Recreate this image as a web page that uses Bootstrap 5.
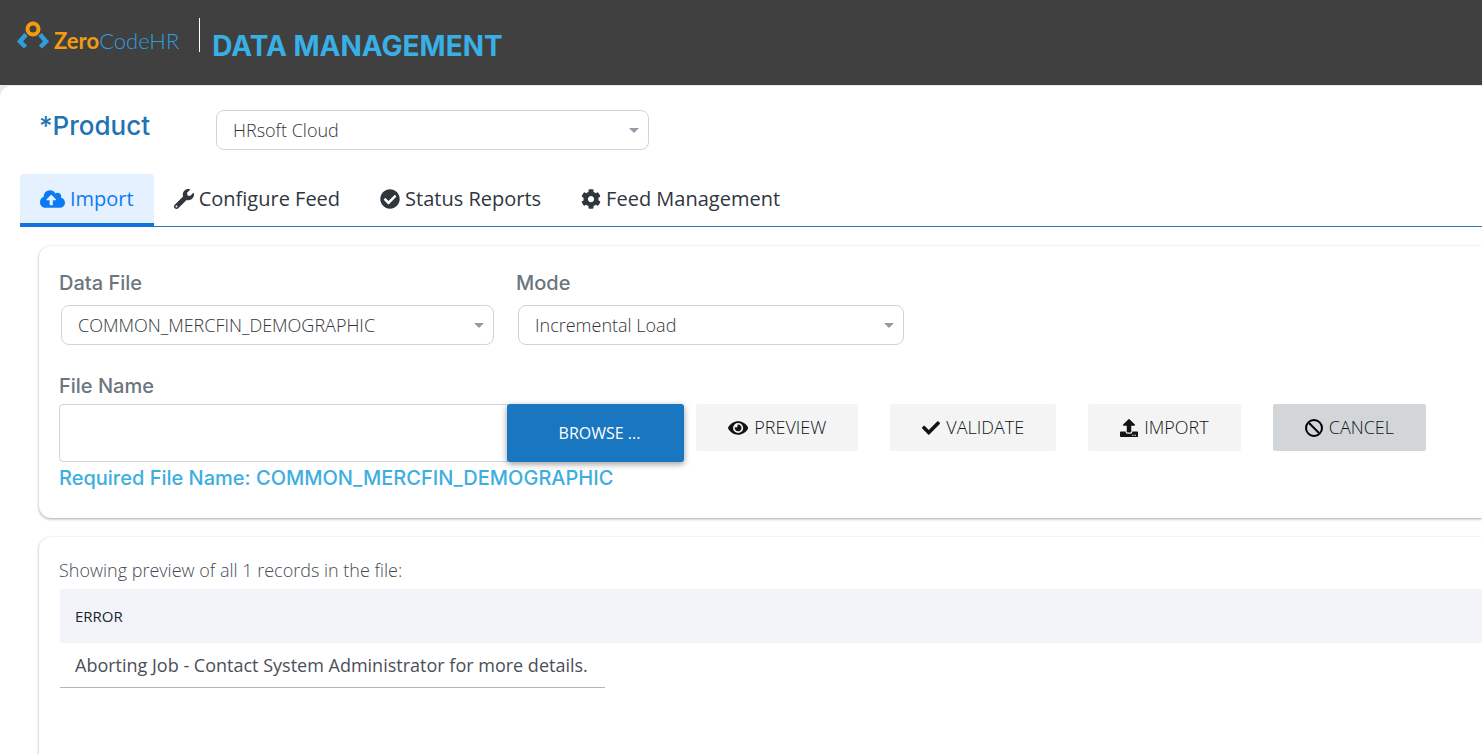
<!DOCTYPE html>
<html lang="en">
<head>
<meta charset="utf-8">
<meta name="viewport" content="width=device-width, initial-scale=1">
<title>ZeroCodeHR - Data Management</title>
<link href="https://cdn.jsdelivr.net/npm/bootstrap@5.3.0/dist/css/bootstrap.min.css" rel="stylesheet">
<style>
  body { font-family: "Open Sans", "Noto Sans", sans-serif; font-size: 18px; line-height: 24px; color: #495057; background: #e9eaec; }
  .icon { height: 1em; width: auto; fill: currentColor; flex: none; }
  .heading-font { font-family: Inter, "Open Sans", sans-serif; font-weight: 500; }
  .topbar { background: #404040; height: 85px; padding: 18px 16px 0; }
  .brand-mark { width: 33px; height: 30px; margin-top: 2px; }
  .brand-name { font-family: Lato, "Open Sans", sans-serif; font-size: 22px; font-weight: 300; color: #2e9fdc; margin: 11px 20px 0 5px; }
  .brand-name b { color: #f39c12; font-weight: 700; }
  .divider { width: 1px; height: 34px; background: #fff; margin-right: 12px; }
  .page-title { font-size: 28px; line-height: 32px; color: #38b0e5; font-weight: 650; margin: 12px 0 0; }
  .sheet { background: #fff; border-radius: 12px 0 0 0; margin-top: 1px; min-height: calc(100vh - 86px); padding: 24px 0 0 20px; }
  .product-row { padding-left: 19px; height: 64px; }
  .product-label { width: 177px; font-size: 26px; line-height: 32px; color: #2273b5; }
  .pick { height: 40px; font-size: 18px; font-weight: 300; line-height: 24px; color: #30363c; padding: 6px 32px 6px 16px; border: 1px solid #ced4da; border-radius: 8px;
    background-image: url("data:image/svg+xml,%3Csvg xmlns='http://www.w3.org/2000/svg' viewBox='0 0 10 5'%3E%3Cpath fill='%23939ba6' d='M0 0h10L5 5z'/%3E%3C/svg%3E");
    background-size: 10px 5px; background-position: right 9px center; }
  .pick-wide { width: 433px; }
  .pick-mid { width: 386px; }
  .tabs { border-bottom: 1px solid #2779b5; height: 53px; }
  .tabs .nav-link { display: flex; align-items: center; gap: 5px; font-size: 20px; line-height: 24px; color: #30363d; height: 53px; padding: 0 20px; border-bottom: 4px solid transparent; border-radius: 4px 4px 0 0; }
  .tabs .nav-link.active { color: #0d7af5; background: #e5f1fe; border-bottom-color: #1173df; }
  .panel { margin-left: 19px; background: #fff; border-radius: 12px 0 0 12px; box-shadow: 0 1px 3px rgba(0,0,0,.35); padding: 20px 0 0 20px; }
  .form-panel { margin-top: 19px; padding-bottom: 24px; }
  .result-panel { margin-top: 19px; min-height: 240px; }
  .field-label { display: block; font-size: 20px; line-height: 34px; color: #6c757d; }
  .field-row { gap: 22px; }
  .field-row .pick { margin: 5px 0 0 2px; }
  .file-row { margin-top: 1px; }
  .file-box { flex: none; width: 449px; height: 58px; border: 1px solid #ced4da; border-radius: 4px 0 0 4px; font-size: 18px; }
  .browse { width: 177px; height: 58px; margin: 0 12px 0 -1px; font-size: 16px; color: #fff; background: #1976c0; border: 0; border-radius: 3px; box-shadow: 0 2px 6px rgba(0,0,0,.4); padding: 0 0 0 8px; }
  .browse:hover { background: #1569ad; color: #fff; }
  .actions { gap: 32px; }
  .action { display: inline-flex; align-items: center; justify-content: center; gap: 6px; height: 47px; padding: 0 32px; font-size: 18px; font-weight: 300; white-space: nowrap; color: #111417; background: #f4f4f4; border: 0; border-radius: 2px; }
  .action.cancel { background: #d3d6d9; }
  .required { font-size: 20px; line-height: 32px; color: #3daee0; }
  .summary { font-weight: 300; line-height: 26px; color: #454c53; }
  .records { margin: 6px 0 0 1px; border-spacing: 0; }
  .records th { background: #f3f4f9; font-size: 15px; font-weight: 400; color: #212529; height: 54px; padding: 0 15px; }
  .records td { height: 44px; padding: 0 17px 0 15px; border-bottom: 1px solid #b5b5b5; }
  .records .filler { border: 0; }
</style>
</head>
<body>
<header class="topbar d-flex align-items-start">
  <svg class="brand-mark" viewBox="0 0 33 30" fill="none" aria-hidden="true">
    <path d="M10 14.500 4 21.500l5.500 5.500M24 14.500 30 21.500l-5.500 5.500" stroke="#2e9fdc" stroke-width="4.500"/>
    <circle cx="17" cy="9" r="5.500" stroke="#f39c12" stroke-width="4"/>
  </svg>
  <div class="brand-name"><b>Zero</b>CodeHR</div>
  <div class="divider"></div>
  <h1 class="page-title heading-font">DATA MANAGEMENT</h1>
</header>

<main class="sheet">
  <div class="product-row d-flex align-items-start">
    <label for="product" class="product-label heading-font">*Product</label>
    <select id="product" class="form-select pick pick-wide"><option>HRsoft Cloud</option></select>
  </div>

  <nav class="nav tabs">
    <a class="nav-link active" href="#import" aria-current="page"><svg class="icon" viewBox="0 0 640 512"><path d="M537.6 226.6c4.1-10.7 6.4-22.4 6.4-34.6 0-53-43-96-96-96-19.7 0-38.1 6-53.3 16.2C367 64.2 315.3 32 256 32c-88.4 0-160 71.6-160 160 0 2.7.1 5.4.2 8.1C40.2 219.8 0 273.2 0 336c0 79.5 64.5 144 144 144h368c70.700 0 128-57.300 128-128 0-61.900-44-113.600-102.400-125.400zM393.400 288H328v112c0 8.800-7.200 16-16 16h-48c-8.800 0-16-7.200-16-16V288h-65.400c-14.300 0-21.400-17.200-11.300-27.300l105.400-105.400c6.200-6.200 16.400-6.200 22.600 0l105.400 105.400c10.100 10.100 2.900 27.300-11.300 27.300z"/></svg>Import</a>
    <a class="nav-link" href="#configure"><svg class="icon" viewBox="0 0 512 512"><path d="M507.730 109.100c-2.240-9.030-13.540-12.090-20.120-5.510l-74.360 74.360-67.880-11.310-11.310-67.880 74.360-74.360c6.620-6.620 3.430-17.900-5.660-20.160-47.380-11.740-99.550.91-136.580 37.930-39.640 39.640-50.550 97.100-34.050 147.200L18.740 402.760c-24.990 24.990-24.990 65.510 0 90.500 24.990 24.990 65.510 24.990 90.500 0l213.210-213.210c50.120 16.710 107.470 5.680 147.370-34.220 37.070-37.070 49.700-89.320 37.910-136.730zM64 472c-13.250 0-24-10.750-24-24 0-13.260 10.750-24 24-24s24 10.740 24 24c0 13.250-10.750 24-24 24z"/></svg>Configure Feed</a>
    <a class="nav-link" href="#status"><svg class="icon" viewBox="0 0 512 512"><path d="M504 256c0 136.967-111.033 248-248 248S8 392.967 8 256 119.033 8 256 8s248 111.033 248 248zM227.314 387.314l184-184c6.248-6.248 6.248-16.379 0-22.627l-22.627-22.627c-6.248-6.249-16.379-6.249-22.628 0L216 308.118l-70.059-70.059c-6.248-6.248-16.379-6.248-22.628 0l-22.627 22.627c-6.248 6.248-6.248 16.379 0 22.627l104 104c6.249 6.249 16.379 6.249 22.628.001z"/></svg>Status Reports</a>
    <a class="nav-link" href="#feeds"><svg class="icon" viewBox="0 0 512 512"><path d="M487.400 315.700l-42.600-24.600c4.300-23.200 4.300-47 0-70.200l42.600-24.600c4.900-2.800 7.100-8.600 5.500-14-11.100-35.600-30-67.800-54.700-94.600-3.800-4.100-10-5.100-14.800-2.300L380.800 110c-17.900-15.400-38.500-27.300-60.800-35.100V25.800c0-5.600-3.900-10.500-9.400-11.700-36.700-8.200-74.300-7.800-109.200 0-5.500 1.200-9.400 6.100-9.400 11.700V75c-22.200 7.900-42.800 19.800-60.800 35.100L88.700 85.500c-4.900-2.800-11-1.900-14.800 2.300-24.700 26.700-43.600 58.900-54.700 94.600-1.700 5.400.6 11.200 5.500 14L67.300 221c-4.300 23.200-4.300 47 0 70.200l-42.600 24.600c-4.900 2.800-7.100 8.600-5.500 14 11.100 35.600 30 67.800 54.700 94.600 3.800 4.100 10 5.100 14.800 2.300l42.600-24.600c17.900 15.400 38.500 27.300 60.800 35.100v49.200c0 5.600 3.900 10.500 9.400 11.700 36.700 8.200 74.300 7.800 109.200 0 5.500-1.200 9.400-6.100 9.400-11.700v-49.200c22.200-7.900 42.800-19.800 60.800-35.100l42.600 24.600c4.900 2.800 11 1.900 14.800-2.300 24.700-26.700 43.600-58.900 54.700-94.600 1.500-5.500-.7-11.300-5.600-14.100zM256 336c-44.100 0-80-35.900-80-80s35.900-80 80-80 80 35.900 80 80-35.900 80-80 80z"/></svg>Feed Management</a>
  </nav>

  <form class="panel form-panel">
    <div class="d-flex field-row mb-4">
      <div>
        <label for="datafile" class="field-label heading-font">Data File</label>
        <select id="datafile" class="form-select pick pick-wide"><option>COMMON_MERCFIN_DEMOGRAPHIC</option></select>
      </div>
      <div>
        <label for="mode" class="field-label heading-font">Mode</label>
        <select id="mode" class="form-select pick pick-mid"><option>Incremental Load</option></select>
      </div>
    </div>
    <label for="filename" class="field-label heading-font">File Name</label>
    <div class="d-flex align-items-start file-row">
      <input id="filename" type="text" class="form-control file-box">
      <button type="button" class="btn browse flex-shrink-0">BROWSE ...</button>
      <div class="d-flex actions">
      <button type="button" class="btn action"><svg class="icon" viewBox="0 0 576 512"><path d="M572.520 241.400C518.290 135.590 410.930 64 288 64S57.680 135.640 3.480 241.410a32.350 32.350 0 0 0 0 29.190C57.710 376.410 165.070 448 288 448s230.320-71.640 284.520-177.410a32.350 32.350 0 0 0 0-29.190zM288 400a144 144 0 1 1 144-144 143.930 143.930 0 0 1-144 144zm0-240a95.310 95.310 0 0 0-25.310 3.790 47.850 47.850 0 0 1-66.900 66.900A95.780 95.780 0 1 0 288 160z"/></svg>PREVIEW</button>
      <button type="button" class="btn action"><svg class="icon" viewBox="0 0 512 512"><path d="M173.898 439.404l-166.400-166.400c-9.997-9.997-9.997-26.206 0-36.204l36.203-36.204c9.997-9.998 26.207-9.998 36.204 0L192 312.690 432.095 72.596c9.997-9.997 26.207-9.997 36.204 0l36.203 36.204c9.997 9.997 9.997 26.206 0 36.204l-294.400 294.401c-9.998 9.997-26.207 9.997-36.204-.001z"/></svg>VALIDATE</button>
      <button type="submit" class="btn action"><svg class="icon" viewBox="0 0 512 512"><path d="M296 384h-80c-13.300 0-24-10.700-24-24V192h-87.700c-17.800 0-26.700-21.500-14.100-34.100L242.300 5.700c7.500-7.500 19.800-7.500 27.300 0l152.200 152.200c12.600 12.600 3.700 34.100-14.100 34.100H320v168c0 13.300-10.700 24-24 24zm216-8v112c0 13.300-10.700 24-24 24H24c-13.300 0-24-10.700-24-24V376c0-13.300 10.700-24 24-24h136v8c0 30.900 25.100 56 56 56h80c30.900 0 56-25.100 56-56v-8h136c13.300 0 24 10.700 24 24zm-124 88c0-11-9-20-20-20s-20 9-20 20 9 20 20 20 20-9 20-20zm64 0c0-11-9-20-20-20s-20 9-20 20 9 20 20 20 20-9 20-20z"/></svg>IMPORT</button>
      <button type="reset" class="btn action cancel"><svg class="icon" viewBox="0 0 18 18" fill="none"><path d="M4 4l10 10" stroke="#000" stroke-width="2"/><path fill-rule="evenodd" fill="#000" d="M9 0a9 9 0 1 0 0 18A9 9 0 0 0 9 0zm0 2a7 7 0 1 1 0 14A7 7 0 0 1 9 2z"/></svg>CANCEL</button>
      </div>
    </div>
    <div class="required heading-font">Required File Name: COMMON_MERCFIN_DEMOGRAPHIC</div>
  </form>

  <section class="panel result-panel">
    <div class="summary">Showing preview of all 1 records in the file:</div>
    <table class="records w-100">
      <thead><tr><th scope="col">ERROR</th><th class="w-100"></th></tr></thead>
      <tbody><tr><td class="text-nowrap">Aborting Job - Contact System Administrator for more details.</td><td class="filler"></td></tr></tbody>
    </table>
  </section>
</main>
<script src="https://cdn.jsdelivr.net/npm/bootstrap@5.3.0/dist/js/bootstrap.bundle.min.js"></script>
</body>
</html>
